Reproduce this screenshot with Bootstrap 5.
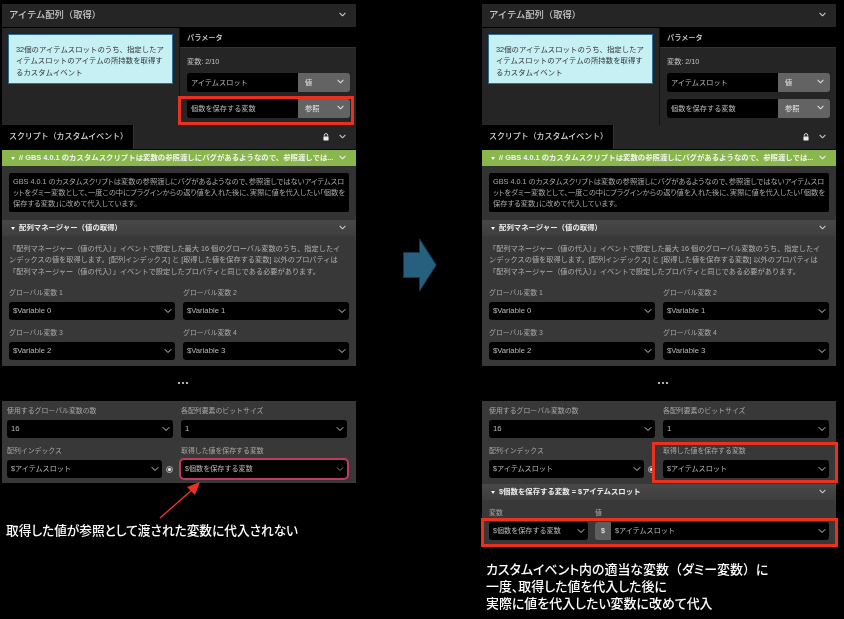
<!DOCTYPE html>
<html lang="ja">
<head>
<meta charset="utf-8">
<title>アイテム配列（取得）</title>
<link href="https://cdn.jsdelivr.net/npm/bootstrap@5.3.0/dist/css/bootstrap.min.css" rel="stylesheet">
<style>
html,body{background:#000;margin:0;height:619px;overflow:hidden}
body{font-family:"Liberation Sans","Noto Sans CJK JP",sans-serif;font-size:7.2px;line-height:1;color:#c4c4c4;position:relative}
.stage{padding:4px 0 0 2px;filter:blur(.35px);will-change:transform}
.gpane{width:354px;flex:none}
.gmid{width:126px;flex:none}
.garrow{display:block;margin:234px 0 0 47px}
.gtitle{height:24px;background:#252525;border-bottom:1px solid #000;padding:0 10px 0 7px;font-size:9.3px;color:#c8c8c8;font-weight:500}
.gchev{flex:none;display:block;margin-bottom:2px}
.gsplit{height:97px;background:#252525}
.ginfo-wrap{width:177px;flex:none;padding:6px}
.ginfo{height:50px;background:#c6f0f4;border:1px solid #2c6f94;color:#333;padding:9px 7px;line-height:11.3px;white-space:nowrap;font-size:7.4px}
.gparam{flex:1;border-left:1px solid #111}
.gparam-h{height:20px;background:#000;padding-left:7px;color:#d8d8d8;border-bottom:1px solid #333;font-weight:500}
.gparam-b{padding:10px 6px 0 7px}
.gcount{margin-bottom:8px}
.gfield{height:19px;margin-bottom:7px}
.gfield-name{flex:1;background:#000;border-radius:3px 0 0 3px;padding-left:4px;height:100%;color:#bbb}
.gfield-type{width:52px;height:100%;background:#636363;border-radius:0 3px 3px 0;padding:0 6px 0 7px;color:#ddd;font-weight:500}
.gscript{height:25px;background:#252525;border-bottom:1px solid #000}
.gscript-tab{width:132px;height:100%;background:#000;padding-left:7px;font-size:7.95px;color:#d8d8d8;font-weight:500;border-right:1px solid #333;white-space:nowrap}
.gscript-tools{padding-right:10px;gap:10px}
.gbar{height:16px;padding:0 10px 0 9px;font-weight:700;color:#eee;font-size:7.4px;white-space:nowrap}
.gbar-g{background:#8ab64e;color:#f4f4f4}
.gbar-k{background:linear-gradient(#484848,#3e3e3e)}
.gtri{flex:none;margin-right:4px;display:block}
.gbody{background:#383838}
.gcodewrap{height:54px;padding:7px 7px 0;background:#333}
.gcode{height:39px;background:#000;border-radius:2px;padding:4px;line-height:10.9px;color:#a8a8a8;white-space:nowrap;font-size:7.3px;font-feature-settings:"palt"}
.gdoc{padding:7px 7px 0;line-height:11.4px;color:#b0b0b0;white-space:nowrap;height:53px}
.ggrid{display:grid;grid-template-columns:166px 166px;column-gap:8px;row-gap:9px;padding:0 7px}
.ggrid-s{padding-left:5px}
.glabel{height:13px;line-height:8px;margin-bottom:0;display:block;color:#a8a8a8;font-size:6.9px;white-space:nowrap}
.gsel.form-select{height:18px;min-height:0;background-color:#000;border:0;border-radius:3px;color:#bbb;font-size:7.1px;line-height:18px;padding:0 12px 0 4px;background-position:right 3px center;background-size:8px 8px;background-image:url("data:image/svg+xml,%3csvg xmlns='http://www.w3.org/2000/svg' viewBox='0 0 16 16'%3e%3cpath fill='none' stroke='%23cccccc' stroke-linecap='round' stroke-linejoin='round' stroke-width='2' d='m2 5 6 6 6-6'/%3e%3c/svg%3e");font-family:inherit;box-shadow:none}
.gsel.gsel-lat.form-select{font-size:7.7px}
.gsel-hot.form-select{outline:2px solid #c2385f;outline-offset:0;background-image:url("data:image/svg+xml,%3csvg xmlns='http://www.w3.org/2000/svg' viewBox='0 0 16 16'%3e%3cpath fill='none' stroke='%23777777' stroke-linecap='round' stroke-linejoin='round' stroke-width='2' d='m2 5 6 6 6-6'/%3e%3c/svg%3e")}
.gspace{height:35px;padding-top:16px;font-size:0}
.gdots{gap:2px;padding-left:176px}
.gdot{width:2px;height:2px;border-radius:50%;background:#eee}
.gpanel2{background:#383838;padding-top:6px}
.grow-r{display:flex;align-items:center}
.grow-r .gsel{flex:1;min-width:0}
.gradio{flex:none;margin:0 .5px 0 3.5px}
.gend{height:6px}
.gend-s{height:5px}
.gbar-k2{margin-top:6px}
.gassign{display:grid;grid-template-columns:99px 1fr;column-gap:7px;padding:9px 7px 0}
.gval-pre{width:16px;height:18px;background:#5e5e5e;border-radius:3px 0 0 3px;flex:none;color:#ddd;font-weight:700;line-height:18px;text-align:center}
.gval .gsel.form-select{border-radius:0 3px 3px 0;padding-left:4px}
.gnote{color:#fff;font-size:12.7px;font-weight:500;white-space:nowrap;line-height:17px;font-feature-settings:"palt"}
.gnote-l{margin:40px 0 0 4px}
.gnote-r{margin:16px 0 0 4px;font-size:12.95px}
.gfw{font-feature-settings:normal}
.redbox{position:absolute;border:3px solid #e8321f;pointer-events:none;background:transparent}
.rb1{left:178px;top:96px;width:176px;height:29px}
.rb2{left:652px;top:442px;width:186px;height:41px}
.rb3{left:481px;top:518px;width:357px;height:29px}
.redarrow{position:absolute;left:155px;top:478px}
</style>
</head>
<body>
<div class="stage d-flex align-items-start">

  <section class="gpane">
    <div class="gtitle d-flex align-items-center justify-content-between"><span>アイテム配列（取得）</span><svg class="gchev" width="7" height="7" viewBox="0 0 16 16"><path fill="none" stroke="#ccc" stroke-width="2.4" stroke-linecap="round" stroke-linejoin="round" d="m2 5 6 6 6-6"/></svg></div>
    <div class="gsplit d-flex">
      <div class="ginfo-wrap"><div class="ginfo">32個のアイテムスロットのうち、指定したア<br>イテムスロットのアイテムの所持数を取得す<br>るカスタムイベント</div></div>
      <div class="gparam">
        <div class="gparam-h d-flex align-items-center">パラメータ</div>
        <div class="gparam-b">
          <div class="gcount">変数: 2/10</div>
          <div class="gfield d-flex"><div class="gfield-name d-flex align-items-center">アイテムスロット</div><div class="gfield-type d-flex align-items-center justify-content-between"><span>値</span><svg class="gchev" width="7" height="7" viewBox="0 0 16 16"><path fill="none" stroke="#ddd" stroke-width="2.4" stroke-linecap="round" stroke-linejoin="round" d="m2 5 6 6 6-6"/></svg></div></div>
          <div class="gfield d-flex"><div class="gfield-name d-flex align-items-center">個数を保存する変数</div><div class="gfield-type d-flex align-items-center justify-content-between"><span>参照</span><svg class="gchev" width="7" height="7" viewBox="0 0 16 16"><path fill="none" stroke="#ddd" stroke-width="2.4" stroke-linecap="round" stroke-linejoin="round" d="m2 5 6 6 6-6"/></svg></div></div>
        </div>
      </div>
    </div>
    <div class="gscript d-flex align-items-center justify-content-between">
      <div class="gscript-tab d-flex align-items-center">スクリプト（カスタムイベント）</div>
      <div class="gscript-tools d-flex align-items-center"><svg width="6" height="8" viewBox="0 0 14 18"><path d="M3 8V5a4 4 0 0 1 8 0v3" fill="none" stroke="#eee" stroke-width="2"/><rect x="1" y="8" width="12" height="9" rx="1" fill="#eee"/></svg><svg class="gchev" width="7" height="7" viewBox="0 0 16 16"><path fill="none" stroke="#ccc" stroke-width="2.4" stroke-linecap="round" stroke-linejoin="round" d="m2 5 6 6 6-6"/></svg></div>
    </div>
    <div class="gbar gbar-g d-flex align-items-center"><svg class="gtri" width="4" height="3" viewBox="0 0 10 8"><path d="M0 0h10L5 8z" fill="#fff"/></svg><span class="flex-grow-1">// GBS 4.0.1 のカスタムスクリプトは変数の参照渡しにバグがあるようなので、参照渡しでは...</span><svg class="gchev" width="7" height="7" viewBox="0 0 16 16"><path fill="none" stroke="#eee" stroke-width="2.4" stroke-linecap="round" stroke-linejoin="round" d="m2 5 6 6 6-6"/></svg></div>
    <div class="gcodewrap"><div class="gcode">GBS 4.0.1 のカスタムスクリプトは変数の参照渡しにバグがあるようなので、参照渡しではないアイテムスロ<br>ットをダミー変数として、一度この中にプラグインからの返り値を入れた後に、実際に値を代入したい「個数を<br>保存する変数」に改めて代入しています。</div></div>
    <div class="gbar gbar-k d-flex align-items-center"><svg class="gtri" width="4" height="3" viewBox="0 0 10 8"><path d="M0 0h10L5 8z" fill="#fff"/></svg><span class="flex-grow-1">配列マネージャー（値の取得）</span><svg class="gchev" width="7" height="7" viewBox="0 0 16 16"><path fill="none" stroke="#ccc" stroke-width="2.4" stroke-linecap="round" stroke-linejoin="round" d="m2 5 6 6 6-6"/></svg></div>
    <div class="gbody">
      <div class="gdoc">「配列マネージャー（値の代入）」イベントで設定した最大 16 個のグローバル変数のうち、指定したイ<br>ンデックスの値を取得します。[配列インデックス] と [取得した値を保存する変数] 以外のプロパティは<br>「配列マネージャー（値の代入）」イベントで設定したプロパティと同じである必要があります。</div>
      <div class="ggrid">
        <div><label class="glabel">グローバル変数 1</label><select class="form-select gsel gsel-lat"><option>$Variable 0</option></select></div>
        <div><label class="glabel">グローバル変数 2</label><select class="form-select gsel gsel-lat"><option>$Variable 1</option></select></div>
        <div><label class="glabel">グローバル変数 3</label><select class="form-select gsel gsel-lat"><option>$Variable 2</option></select></div>
        <div><label class="glabel">グローバル変数 4</label><select class="form-select gsel gsel-lat"><option>$Variable 3</option></select></div>
      </div>
      <div class="gend"></div>
    </div>
    <div class="gspace"><div class="gdots d-flex"><i class="gdot"></i><i class="gdot"></i><i class="gdot"></i></div></div>
    <div class="gpanel2">
      <div class="ggrid ggrid-s">
        <div><label class="glabel">使用するグローバル変数の数</label><select class="form-select gsel gsel-lat"><option>16</option></select></div>
        <div><label class="glabel">各配列要素のビットサイズ</label><select class="form-select gsel gsel-lat"><option>1</option></select></div>
        <div><label class="glabel">配列インデックス</label><div class="grow-r"><select class="form-select gsel"><option>$アイテムスロット</option></select><svg class="gradio" width="7" height="7" viewBox="0 0 14 14"><circle cx="7" cy="7" r="6" fill="none" stroke="#ccc" stroke-width="1.6"/><circle cx="7" cy="7" r="3.4" fill="#ddd"/></svg></div></div>
        <div><label class="glabel">取得した値を保存する変数</label><select class="form-select gsel gsel-hot"><option>$個数を保存する変数</option></select></div>
      </div>
      <div class="gend-s"></div>
    </div>
    <div class="gnote gnote-l">取得した値が参照として渡された変数に代入されない</div>
  </section>

  <div class="gmid"><svg class="garrow" width="34" height="54" viewBox="0 0 34 54"><path d="M.5 14.5h16V.8L33.3 27 16.500 53.200V39.500H.5z" fill="#27607f" stroke="#16364a"/></svg></div>

  <section class="gpane">
    <div class="gtitle d-flex align-items-center justify-content-between"><span>アイテム配列（取得）</span><svg class="gchev" width="7" height="7" viewBox="0 0 16 16"><path fill="none" stroke="#ccc" stroke-width="2.4" stroke-linecap="round" stroke-linejoin="round" d="m2 5 6 6 6-6"/></svg></div>
    <div class="gsplit d-flex">
      <div class="ginfo-wrap"><div class="ginfo">32個のアイテムスロットのうち、指定したア<br>イテムスロットのアイテムの所持数を取得す<br>るカスタムイベント</div></div>
      <div class="gparam">
        <div class="gparam-h d-flex align-items-center">パラメータ</div>
        <div class="gparam-b">
          <div class="gcount">変数: 2/10</div>
          <div class="gfield d-flex"><div class="gfield-name d-flex align-items-center">アイテムスロット</div><div class="gfield-type d-flex align-items-center justify-content-between"><span>値</span><svg class="gchev" width="7" height="7" viewBox="0 0 16 16"><path fill="none" stroke="#ddd" stroke-width="2.4" stroke-linecap="round" stroke-linejoin="round" d="m2 5 6 6 6-6"/></svg></div></div>
          <div class="gfield d-flex"><div class="gfield-name d-flex align-items-center">個数を保存する変数</div><div class="gfield-type d-flex align-items-center justify-content-between"><span>参照</span><svg class="gchev" width="7" height="7" viewBox="0 0 16 16"><path fill="none" stroke="#ddd" stroke-width="2.4" stroke-linecap="round" stroke-linejoin="round" d="m2 5 6 6 6-6"/></svg></div></div>
        </div>
      </div>
    </div>
    <div class="gscript d-flex align-items-center justify-content-between">
      <div class="gscript-tab d-flex align-items-center">スクリプト（カスタムイベント）</div>
      <div class="gscript-tools d-flex align-items-center"><svg width="6" height="8" viewBox="0 0 14 18"><path d="M3 8V5a4 4 0 0 1 8 0v3" fill="none" stroke="#eee" stroke-width="2"/><rect x="1" y="8" width="12" height="9" rx="1" fill="#eee"/></svg><svg class="gchev" width="7" height="7" viewBox="0 0 16 16"><path fill="none" stroke="#ccc" stroke-width="2.4" stroke-linecap="round" stroke-linejoin="round" d="m2 5 6 6 6-6"/></svg></div>
    </div>
    <div class="gbar gbar-g d-flex align-items-center"><svg class="gtri" width="4" height="3" viewBox="0 0 10 8"><path d="M0 0h10L5 8z" fill="#fff"/></svg><span class="flex-grow-1">// GBS 4.0.1 のカスタムスクリプトは変数の参照渡しにバグがあるようなので、参照渡しでは...</span><svg class="gchev" width="7" height="7" viewBox="0 0 16 16"><path fill="none" stroke="#eee" stroke-width="2.4" stroke-linecap="round" stroke-linejoin="round" d="m2 5 6 6 6-6"/></svg></div>
    <div class="gcodewrap"><div class="gcode">GBS 4.0.1 のカスタムスクリプトは変数の参照渡しにバグがあるようなので、参照渡しではないアイテムスロ<br>ットをダミー変数として、一度この中にプラグインからの返り値を入れた後に、実際に値を代入したい「個数を<br>保存する変数」に改めて代入しています。</div></div>
    <div class="gbar gbar-k d-flex align-items-center"><svg class="gtri" width="4" height="3" viewBox="0 0 10 8"><path d="M0 0h10L5 8z" fill="#fff"/></svg><span class="flex-grow-1">配列マネージャー（値の取得）</span><svg class="gchev" width="7" height="7" viewBox="0 0 16 16"><path fill="none" stroke="#ccc" stroke-width="2.4" stroke-linecap="round" stroke-linejoin="round" d="m2 5 6 6 6-6"/></svg></div>
    <div class="gbody">
      <div class="gdoc">「配列マネージャー（値の代入）」イベントで設定した最大 16 個のグローバル変数のうち、指定したイ<br>ンデックスの値を取得します。[配列インデックス] と [取得した値を保存する変数] 以外のプロパティは<br>「配列マネージャー（値の代入）」イベントで設定したプロパティと同じである必要があります。</div>
      <div class="ggrid">
        <div><label class="glabel">グローバル変数 1</label><select class="form-select gsel gsel-lat"><option>$Variable 0</option></select></div>
        <div><label class="glabel">グローバル変数 2</label><select class="form-select gsel gsel-lat"><option>$Variable 1</option></select></div>
        <div><label class="glabel">グローバル変数 3</label><select class="form-select gsel gsel-lat"><option>$Variable 2</option></select></div>
        <div><label class="glabel">グローバル変数 4</label><select class="form-select gsel gsel-lat"><option>$Variable 3</option></select></div>
      </div>
      <div class="gend"></div>
    </div>
    <div class="gspace"><div class="gdots d-flex"><i class="gdot"></i><i class="gdot"></i><i class="gdot"></i></div></div>
    <div class="gpanel2">
      <div class="ggrid">
        <div><label class="glabel">使用するグローバル変数の数</label><select class="form-select gsel gsel-lat"><option>16</option></select></div>
        <div><label class="glabel">各配列要素のビットサイズ</label><select class="form-select gsel gsel-lat"><option>1</option></select></div>
        <div><label class="glabel">配列インデックス</label><div class="grow-r"><select class="form-select gsel"><option>$アイテムスロット</option></select><svg class="gradio" width="7" height="7" viewBox="0 0 14 14"><circle cx="7" cy="7" r="6" fill="none" stroke="#ccc" stroke-width="1.6"/><circle cx="7" cy="7" r="3.4" fill="#ddd"/></svg></div></div>
        <div><label class="glabel">取得した値を保存する変数</label><select class="form-select gsel"><option>$アイテムスロット</option></select></div>
      </div>
      <div class="gbar gbar-k gbar-k2 d-flex align-items-center"><svg class="gtri" width="4" height="3" viewBox="0 0 10 8"><path d="M0 0h10L5 8z" fill="#fff"/></svg><span class="flex-grow-1">$個数を保存する変数 = $アイテムスロット</span><svg class="gchev" width="7" height="7" viewBox="0 0 16 16"><path fill="none" stroke="#ccc" stroke-width="2.4" stroke-linecap="round" stroke-linejoin="round" d="m2 5 6 6 6-6"/></svg></div>
      <div class="gassign">
        <div><label class="glabel">変数</label><select class="form-select gsel"><option>$個数を保存する変数</option></select></div>
        <div class="gval"><label class="glabel">値</label><div class="d-flex"><div class="gval-pre">$</div><select class="form-select gsel"><option>$アイテムスロット</option></select></div></div>
      </div>
      <div class="gend-s"></div>
    </div>
    <div class="gnote gnote-r">カスタムイベント内の適当な変数<span class="gfw">（</span>ダミー変数<span class="gfw">）</span>に<br>一度、取得した値を代入した後に<br>実際に値を代入したい変数に改めて代入</div>
  </section>
</div>

<div class="redbox rb1"></div>
<div class="redbox rb2"></div>
<div class="redbox rb3"></div>
<svg class="redarrow" width="50" height="45" viewBox="0 0 50 45"><path d="M5 40 38 11" stroke="#e8321f" stroke-width="1.6" fill="none"/><path d="M45 4 40 17 32 9z" fill="#e8321f"/></svg>
</body>
</html>
